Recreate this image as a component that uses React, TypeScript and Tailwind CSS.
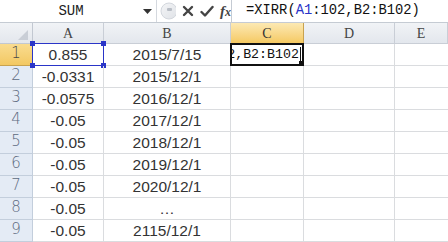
import React from 'react';

const cols = ['A', 'B', 'C', 'D', 'E'];

const rows: [string, string][] = [
  ['0.855', '2015/7/15'],
  ['-0.0331', '2015/12/1'],
  ['-0.0575', '2016/12/1'],
  ['-0.05', '2017/12/1'],
  ['-0.05', '2018/12/1'],
  ['-0.05', '2019/12/1'],
  ['-0.05', '2020/12/1'],
  ['-0.05', '…'],
  ['-0.05', '2115/12/1'],
];

const mono = { fontFamily: '"Liberation Mono", "DejaVu Sans Mono", monospace' };

const Handle = ({ className }: { className: string }) => (
  <span className={`absolute w-[5px] h-[5px] bg-[#2a35c8] ${className}`} />
);

const FormulaBar: React.FC = () => (
  <div className="flex h-[23px] border-b border-[#c5cbd3] bg-white">
    {/* name box */}
    <div className="flex items-center w-[157px] border-r border-[#d5d9df]">
      <div className="w-[142px] text-center text-[14px] text-[#222]" style={mono}>SUM</div>
      <svg width="9" height="5" viewBox="0 0 9 5" className="ml-[1px]">
        <path d="M0 0 L9 0 L4.5 5 Z" fill="#333" />
      </svg>
    </div>

    {/* buttons */}
    <div className="flex items-center w-[74px] pl-[3px] gap-[6px]">
      <svg width="16" height="18" viewBox="0 0 16 18">
        <defs>
          <linearGradient id="rb" x1="0" y1="0" x2="1" y2="1">
            <stop offset="0" stopColor="#f4f5f7" />
            <stop offset="1" stopColor="#dfe2e7" />
          </linearGradient>
        </defs>
        <circle cx="9" cy="9" r="8" fill="url(#rb)" stroke="#d3d7dd" />
        <rect x="7" y="6" width="5" height="3" rx="1" fill="#b9bec6" />
      </svg>
      <svg width="12" height="12" viewBox="0 0 12 12">
        <path d="M2 2 L10 10 M10 2 L2 10" stroke="#444" strokeWidth="2.4" strokeLinecap="round" />
      </svg>
      <svg width="14" height="13" viewBox="0 0 14 13">
        <path d="M1.5 7 L5 10.5 L12.5 2" stroke="#444" strokeWidth="2.4" fill="none" strokeLinecap="round" strokeLinejoin="round" />
      </svg>
      <span className="text-[15px] italic font-bold text-[#444] leading-none" style={{ fontFamily: '"Liberation Serif", serif' }}>
        f<span className="text-[12px]">x</span>
      </span>
    </div>

    {/* formula */}
    <div className="flex-1 flex items-center border-l border-[#c5cbd3] pl-[14px] text-[13.8px] text-[#111]" style={mono}>
      =XIRR(<span className="text-[#2a35c8]">A1</span>:102,B2:B102)
    </div>
  </div>
);

export default function App() {
  return (
    <div className="w-[448px] h-[242px] overflow-hidden bg-white select-none">
      <FormulaBar />

      <div className="grid grid-cols-[33px_71px_127px_73px_91px_1fr]">
        {/* column headers */}
        <div className="relative h-[21px] bg-gradient-to-b from-[#f1f3f6] to-[#e3e7ed] border-r border-b border-[#c2c8d1]">
          <svg width="10" height="10" viewBox="0 0 10 10" className="absolute right-[4px] bottom-[3px]">
            <path d="M10 0 L10 10 L0 10 Z" fill="#c9ced6" />
          </svg>
        </div>
        {cols.map((c) => (
          <div
            key={c}
            className={`h-[21px] flex items-center justify-center text-[14px] border-r border-b ${
              c === 'C'
                ? 'bg-gradient-to-b from-[#fce9b3] to-[#f5c961] border-[#c8a24f] text-[#333]'
                : 'bg-gradient-to-b from-[#f1f3f6] to-[#e3e7ed] border-[#c9ced6] text-[#444]'
            }`}
            style={{ fontFamily: '"Liberation Serif", serif' }}
          >
            {c}
          </div>
        ))}

        {/* rows */}
        {rows.map(([a, b], i) => (
          <React.Fragment key={i}>
            <div
              className={`h-[22px] flex items-end justify-center pb-[1px] text-[15px] border-r border-b ${
                i === 0
                  ? 'bg-gradient-to-b from-[#f9dc8f] to-[#f3c862] border-[#c8a24f] text-[#4a4a4a]'
                  : 'bg-[#e4ebf5] border-[#c3cedc] text-[#5c6a80]'
              }`}
              style={{ fontFamily: '"DejaVu Sans", sans-serif', fontWeight: 300 }}
            >
              {i + 1}
            </div>
            <div
              className="relative h-[22px] flex items-center justify-center text-[15.5px] text-[#333] border-r border-b border-[#dadcdf]"
              style={{ fontFamily: '"Liberation Sans", Arial, sans-serif' }}
            >
              {a}
              {i === 0 && (
                <div className="absolute left-[-1px] top-[-1px] right-[-1px] bottom-[-1px] border-[1.5px] border-[#2a35c8]">
                  <Handle className="left-[-3px] top-[-3px]" />
                  <Handle className="right-[-3px] top-[-3px]" />
                  <Handle className="left-[-3px] bottom-[-3px]" />
                  <Handle className="right-[-3px] bottom-[-3px]" />
                </div>
              )}
            </div>
            <div
              className="h-[22px] flex items-center justify-center text-[15.5px] text-[#333] border-r border-b border-[#dadcdf]"
              style={{ fontFamily: '"Liberation Sans", Arial, sans-serif' }}
            >
              {b}
            </div>
            <div className="relative h-[22px] border-r border-b border-[#dadcdf]">
              {i === 0 && (
                <div className="absolute left-[-1px] top-[-1px] right-[-1px] bottom-[-1px] border-2 border-[#111] bg-white overflow-hidden">
                  <div className="absolute right-[1px] top-0 bottom-0 flex items-center whitespace-nowrap text-[13.3px] text-[#111]" style={mono}>
                    02,B2:B102
                    <span className="w-[1px] h-[15px] bg-[#111] ml-[1px]" />
                  </div>
                  <span className="absolute right-[-2px] bottom-[-2px] w-[5px] h-[5px] bg-[#111]" />
                </div>
              )}
            </div>
            <div className="h-[22px] border-r border-b border-[#dadcdf]" />
            <div className="h-[22px] border-b border-[#dadcdf]" />
          </React.Fragment>
        ))}
      </div>
    </div>
  );
}
